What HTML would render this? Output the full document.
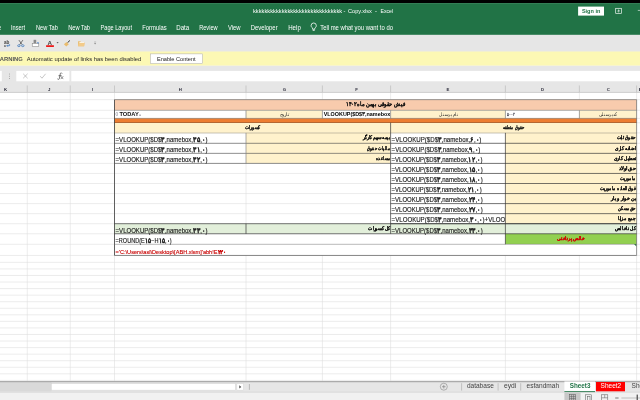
<!DOCTYPE html>
<html lang="en">
<head>
<meta charset="utf-8">
<title>Copy.xlsx - Excel</title>
<style>
html,body{margin:0;padding:0;background:#fff;overflow:hidden}
body{width:640px;height:400px;font-family:"Liberation Sans", sans-serif;}
svg{display:block;position:absolute;left:0;top:0;font-family:"Liberation Sans", sans-serif;}
text{white-space:pre}
</style>
</head>
<body>
<svg width="640" height="400" viewBox="0 0 640 400">
<defs><filter id="soft" x="-2%" y="-2%" width="104%" height="104%" color-interpolation-filters="sRGB"><feGaussianBlur stdDeviation="0.3"/></filter></defs>
<g filter="url(#soft)">
<rect x="-4" y="-4" width="648" height="408" fill="#fff" />
<rect x="-4" y="-4" width="648" height="7.1" fill="#000" />
<rect x="-4" y="3.1" width="648" height="31.8" fill="#217346" />
<rect x="-4" y="34.9" width="648" height="17" fill="#E6E6E6" />
<rect x="-4" y="51.5" width="648" height="14.25" fill="#FCF8B4" />
<rect x="-4" y="65.75" width="648" height="27.2" fill="#E6E6E6" />
<text x="252.9" y="13.1" font-size="5.7" fill="#fff" text-anchor="start" textLength="89.3" lengthAdjust="spacingAndGlyphs" >kkkkkkkkkkkkkkkkkkkkkkkkkkkkkkk</text>
<text x="343.6" y="13.1" font-size="5.7" fill="#fff" text-anchor="start" >-</text>
<text x="348" y="13.1" font-size="5.7" fill="#fff" text-anchor="start" textLength="23.9" lengthAdjust="spacingAndGlyphs" >Copy.xlsx</text>
<text x="375" y="13.1" font-size="5.7" fill="#fff" text-anchor="start" >-</text>
<text x="380.5" y="13.1" font-size="5.7" fill="#fff" text-anchor="start" textLength="12.5" lengthAdjust="spacingAndGlyphs" >Excel</text>
<rect x="578.1" y="6.6" width="25.9" height="9" fill="#fff" />
<text x="591.1" y="13.2" font-size="6" fill="#217346" text-anchor="middle" font-weight="bold" textLength="18.4" lengthAdjust="spacingAndGlyphs" >Sign in</text>
<g stroke="#fff" stroke-width="0.65" fill="none"><rect x="615.7" y="8.3" width="5.9" height="5"/><path d="M617.4 11.2l1.2-1.2 1.2 1.2M618.6 10v2.4"/></g>
<line x1="637.8" y1="10.4" x2="640" y2="10.4" stroke="#fff" stroke-width="0.6" />
<text x="-1.2" y="29.7" font-size="6.3" fill="#fff" text-anchor="start" textLength="2.4" lengthAdjust="spacingAndGlyphs" >e</text>
<text x="11" y="29.7" font-size="6.3" fill="#fff" text-anchor="start" textLength="14" lengthAdjust="spacingAndGlyphs" >Insert</text>
<text x="36" y="29.7" font-size="6.3" fill="#fff" text-anchor="start" textLength="21.8" lengthAdjust="spacingAndGlyphs" >New Tab</text>
<text x="68.2" y="29.7" font-size="6.3" fill="#fff" text-anchor="start" textLength="21.8" lengthAdjust="spacingAndGlyphs" >New Tab</text>
<text x="100.6" y="29.7" font-size="6.3" fill="#fff" text-anchor="start" textLength="31.4" lengthAdjust="spacingAndGlyphs" >Page Layout</text>
<text x="142.3" y="29.7" font-size="6.3" fill="#fff" text-anchor="start" textLength="24.3" lengthAdjust="spacingAndGlyphs" >Formulas</text>
<text x="176.2" y="29.7" font-size="6.3" fill="#fff" text-anchor="start" textLength="13" lengthAdjust="spacingAndGlyphs" >Data</text>
<text x="199.2" y="29.7" font-size="6.3" fill="#fff" text-anchor="start" textLength="18.4" lengthAdjust="spacingAndGlyphs" >Review</text>
<text x="228" y="29.7" font-size="6.3" fill="#fff" text-anchor="start" textLength="12.6" lengthAdjust="spacingAndGlyphs" >View</text>
<text x="250.8" y="29.7" font-size="6.3" fill="#fff" text-anchor="start" textLength="26.8" lengthAdjust="spacingAndGlyphs" >Developer</text>
<text x="288.2" y="29.7" font-size="6.3" fill="#fff" text-anchor="start" textLength="12.6" lengthAdjust="spacingAndGlyphs" >Help</text>
<text x="320.2" y="29.7" font-size="6.3" fill="#fff" text-anchor="start" textLength="72.8" lengthAdjust="spacingAndGlyphs" >Tell me what you want to do</text>
<g stroke="#fff" stroke-width="0.8" fill="none"><path d="M312.6 29.3v-1.2c-1-.7-1.5-1.5-1.5-2.5a2.6 2.6 0 0 1 5.2 0c0 1-.5 1.8-1.5 2.5v1.2z"/><path d="M312.7 30.4h2"/></g>
<g>
<text x="4" y="43.8" font-size="4.6" fill="#444" text-anchor="start" font-weight="bold" textLength="5.4" lengthAdjust="spacingAndGlyphs" >ab</text>
<text x="4" y="46.9" font-size="4.2" fill="#444" text-anchor="start" font-weight="bold" >c</text>
<path d="M9.6 44.2v1.5h-2.6M7.9 44.7l-1 1 1 1" stroke="#2B6CB8" stroke-width="0.7" fill="none"/>
<path d="M18.9 40.1l3.3 4.6M22.9 40.1l-3.3 4.6" stroke="#4a4a4a" stroke-width="0.75" fill="none"/>
<ellipse cx="18.9" cy="45.7" rx="1.3" ry="0.95" stroke="#2B6CB8" stroke-width="0.65" fill="none"/><ellipse cx="22.8" cy="45.7" rx="1.3" ry="0.95" stroke="#2B6CB8" stroke-width="0.65" fill="none"/>
<rect x="33.6" y="39.8" width="2.6" height="4" fill="#8a8a8a"/>
<rect x="32.2" y="43.3" width="6.6" height="3.4" fill="#fff" stroke="#777" stroke-width="0.5"/>
<rect x="37.2" y="42.1" width="1.5" height="1.3" fill="#5B8FD0"/>
<text x="49.7" y="44.7" font-size="6.2" fill="#444" text-anchor="middle" font-weight="bold" >A</text>
<rect x="46.1" y="45.3" width="7.8" height="1.6" fill="#F00000" />
<path d="M56.5 42.1h2.2l-1.1 1.3z" fill="#666"/>
<path d="M69.9 40.5l-2.4 2.2" stroke="#333" stroke-width="1.0"/><path d="M63.9 44.3l2.6-2.2 2.3 2.1-2.5 2.2z" fill="#E9BC6E"/>
<path d="M78.1 41.3h2.3l.6.7h3.2v4.2h-6.1z" fill="#E9BC6E"/><path d="M79.4 41.9h4.6v1.6h-4.6z" fill="#FAF3E4"/><path d="M78.1 46.2l.9-3.2h5.9l-.9 3.2z" fill="#F3CB8A"/>
<path d="M94.1 42.9h2l-1 1.5z" fill="#888"/><path d="M94.1 42.0h2" stroke="#888" stroke-width="0.45"/>
</g>
<text x="-5.4" y="60.6" font-size="5.7" fill="#555" text-anchor="start" font-weight="bold" textLength="28.2" lengthAdjust="spacingAndGlyphs" >WARNING</text>
<text x="26.8" y="60.6" font-size="5.8" fill="#262626" text-anchor="start" textLength="114.4" lengthAdjust="spacingAndGlyphs" >Automatic update of links has been disabled</text>
<rect x="150.4" y="53.9" width="52.1" height="9.7" fill="#fff" stroke="#ABABAB" stroke-width="0.5"/>
<text x="176.3" y="60.7" font-size="5.8" fill="#222" text-anchor="middle" textLength="38.8" lengthAdjust="spacingAndGlyphs" >Enable Content</text>
<rect x="-1" y="70.9" width="2.8" height="10.4" fill="#fff" />
<rect x="9" y="73.6" width="0.7" height="0.9" fill="#8a8a8a" />
<rect x="9" y="75.8" width="0.7" height="0.9" fill="#8a8a8a" />
<rect x="9" y="78" width="0.7" height="0.9" fill="#8a8a8a" />
<rect x="16.3" y="70.9" width="53.1" height="10.4" fill="#fff" />
<rect x="71.3" y="70.9" width="570" height="10.4" fill="#fff" />
<path d="M23.2 73.8l4.4 4.4M27.6 73.8l-4.4 4.4" stroke="#A0A0A0" stroke-width="0.6" fill="none"/>
<path d="M40.2 76.2l1.8 2 3.6-4.4" stroke="#A0A0A0" stroke-width="0.6" fill="none"/>
<g stroke="#4a4a4a" stroke-width="0.75" fill="none" stroke-linecap="round"><path d="M61.9 73.2C61.4 72.5 60.5 72.6 60.3 73.7L59.4 78.4C59.2 79.5 58.4 79.7 57.7 79.1"/><path d="M58.9 75.7H61.2"/><path d="M61 76.5l2 2.3M63 76.5l-2 2.3" stroke-width="0.6"/></g>
<text x="5.6" y="91.2" font-size="4.3" fill="#2d2d3c" text-anchor="middle" font-weight="bold" >K</text>
<text x="49.1" y="91.2" font-size="4.3" fill="#2d2d3c" text-anchor="middle" font-weight="bold" >J</text>
<text x="92.6" y="91.2" font-size="4.3" fill="#2d2d3c" text-anchor="middle" font-weight="bold" >I</text>
<text x="180.3" y="91.2" font-size="4.3" fill="#2d2d3c" text-anchor="middle" font-weight="bold" >H</text>
<text x="284.3" y="91.2" font-size="4.3" fill="#2d2d3c" text-anchor="middle" font-weight="bold" >G</text>
<text x="356.6" y="91.2" font-size="4.3" fill="#2d2d3c" text-anchor="middle" font-weight="bold" >F</text>
<text x="448" y="91.2" font-size="4.3" fill="#2d2d3c" text-anchor="middle" font-weight="bold" >E</text>
<text x="542.6" y="91.2" font-size="4.3" fill="#2d2d3c" text-anchor="middle" font-weight="bold" >D</text>
<text x="608.4" y="91.2" font-size="4.3" fill="#2d2d3c" text-anchor="middle" font-weight="bold" >C</text>
<text x="640.3" y="91.2" font-size="4.3" fill="#2d2d3c" text-anchor="middle" font-weight="bold" >B</text>
<line x1="27.25" y1="85.5" x2="27.25" y2="92.5" stroke="#B5B5B5" stroke-width="0.6" />
<line x1="70.25" y1="85.5" x2="70.25" y2="92.5" stroke="#B5B5B5" stroke-width="0.6" />
<line x1="114.5" y1="85.5" x2="114.5" y2="92.5" stroke="#B5B5B5" stroke-width="0.6" />
<line x1="246" y1="85.5" x2="246" y2="92.5" stroke="#B5B5B5" stroke-width="0.6" />
<line x1="322.4" y1="85.5" x2="322.4" y2="92.5" stroke="#B5B5B5" stroke-width="0.6" />
<line x1="390.6" y1="85.5" x2="390.6" y2="92.5" stroke="#B5B5B5" stroke-width="0.6" />
<line x1="505.4" y1="85.5" x2="505.4" y2="92.5" stroke="#B5B5B5" stroke-width="0.6" />
<line x1="579.4" y1="85.5" x2="579.4" y2="92.5" stroke="#B5B5B5" stroke-width="0.6" />
<line x1="636.6" y1="85.5" x2="636.6" y2="92.5" stroke="#B5B5B5" stroke-width="0.6" />
<line x1="-4" y1="92.4" x2="644" y2="92.4" stroke="#BDBDBD" stroke-width="0.6" />
<line x1="-4" y1="99.65" x2="644" y2="99.65" stroke="#DDDDDD" stroke-width="0.55" />
<line x1="-4" y1="110.3" x2="644" y2="110.3" stroke="#DDDDDD" stroke-width="0.55" />
<line x1="-4" y1="118.4" x2="644" y2="118.4" stroke="#DDDDDD" stroke-width="0.55" />
<line x1="-4" y1="122.7" x2="644" y2="122.7" stroke="#DDDDDD" stroke-width="0.55" />
<line x1="-4" y1="132.9" x2="644" y2="132.9" stroke="#DDDDDD" stroke-width="0.55" />
<line x1="-4" y1="143.3" x2="644" y2="143.3" stroke="#DDDDDD" stroke-width="0.55" />
<line x1="-4" y1="153.35" x2="644" y2="153.35" stroke="#DDDDDD" stroke-width="0.55" />
<line x1="-4" y1="163.4" x2="644" y2="163.4" stroke="#DDDDDD" stroke-width="0.55" />
<line x1="-4" y1="173.45" x2="644" y2="173.45" stroke="#DDDDDD" stroke-width="0.55" />
<line x1="-4" y1="183.5" x2="644" y2="183.5" stroke="#DDDDDD" stroke-width="0.55" />
<line x1="-4" y1="193.55" x2="644" y2="193.55" stroke="#DDDDDD" stroke-width="0.55" />
<line x1="-4" y1="203.6" x2="644" y2="203.6" stroke="#DDDDDD" stroke-width="0.55" />
<line x1="-4" y1="213.65" x2="644" y2="213.65" stroke="#DDDDDD" stroke-width="0.55" />
<line x1="-4" y1="223.7" x2="644" y2="223.7" stroke="#DDDDDD" stroke-width="0.55" />
<line x1="-4" y1="233.75" x2="644" y2="233.75" stroke="#DDDDDD" stroke-width="0.55" />
<line x1="-4" y1="244.3" x2="644" y2="244.3" stroke="#DDDDDD" stroke-width="0.55" />
<line x1="-4" y1="255.45" x2="644" y2="255.45" stroke="#DDDDDD" stroke-width="0.55" />
<line x1="-4" y1="262.357" x2="644" y2="262.357" stroke="#DDDDDD" stroke-width="0.55" />
<line x1="-4" y1="268.914" x2="644" y2="268.914" stroke="#DDDDDD" stroke-width="0.55" />
<line x1="-4" y1="275.471" x2="644" y2="275.471" stroke="#DDDDDD" stroke-width="0.55" />
<line x1="-4" y1="282.028" x2="644" y2="282.028" stroke="#DDDDDD" stroke-width="0.55" />
<line x1="-4" y1="288.585" x2="644" y2="288.585" stroke="#DDDDDD" stroke-width="0.55" />
<line x1="-4" y1="295.142" x2="644" y2="295.142" stroke="#DDDDDD" stroke-width="0.55" />
<line x1="-4" y1="301.699" x2="644" y2="301.699" stroke="#DDDDDD" stroke-width="0.55" />
<line x1="-4" y1="308.256" x2="644" y2="308.256" stroke="#DDDDDD" stroke-width="0.55" />
<line x1="-4" y1="314.813" x2="644" y2="314.813" stroke="#DDDDDD" stroke-width="0.55" />
<line x1="-4" y1="321.37" x2="644" y2="321.37" stroke="#DDDDDD" stroke-width="0.55" />
<line x1="-4" y1="327.927" x2="644" y2="327.927" stroke="#DDDDDD" stroke-width="0.55" />
<line x1="-4" y1="334.484" x2="644" y2="334.484" stroke="#DDDDDD" stroke-width="0.55" />
<line x1="-4" y1="341.041" x2="644" y2="341.041" stroke="#DDDDDD" stroke-width="0.55" />
<line x1="-4" y1="347.598" x2="644" y2="347.598" stroke="#DDDDDD" stroke-width="0.55" />
<line x1="-4" y1="354.155" x2="644" y2="354.155" stroke="#DDDDDD" stroke-width="0.55" />
<line x1="-4" y1="360.712" x2="644" y2="360.712" stroke="#DDDDDD" stroke-width="0.55" />
<line x1="-4" y1="367.269" x2="644" y2="367.269" stroke="#DDDDDD" stroke-width="0.55" />
<line x1="-4" y1="373.826" x2="644" y2="373.826" stroke="#DDDDDD" stroke-width="0.55" />
<line x1="-4" y1="380.383" x2="644" y2="380.383" stroke="#DDDDDD" stroke-width="0.55" />
<line x1="27.25" y1="92.8" x2="27.25" y2="381.4" stroke="#DDDDDD" stroke-width="0.55" />
<line x1="70.25" y1="92.8" x2="70.25" y2="381.4" stroke="#DDDDDD" stroke-width="0.55" />
<line x1="114.5" y1="92.8" x2="114.5" y2="381.4" stroke="#DDDDDD" stroke-width="0.55" />
<line x1="246" y1="92.8" x2="246" y2="381.4" stroke="#DDDDDD" stroke-width="0.55" />
<line x1="322.4" y1="92.8" x2="322.4" y2="381.4" stroke="#DDDDDD" stroke-width="0.55" />
<line x1="390.6" y1="92.8" x2="390.6" y2="381.4" stroke="#DDDDDD" stroke-width="0.55" />
<line x1="505.4" y1="92.8" x2="505.4" y2="381.4" stroke="#DDDDDD" stroke-width="0.55" />
<line x1="579.4" y1="92.8" x2="579.4" y2="381.4" stroke="#DDDDDD" stroke-width="0.55" />
<line x1="636.6" y1="92.8" x2="636.6" y2="381.4" stroke="#DDDDDD" stroke-width="0.55" />
<rect x="114.5" y="99.65" width="522.1" height="10.65" fill="#F8CBAD" />
<rect x="114.5" y="110.3" width="522.1" height="8.1" fill="#fff" />
<rect x="246" y="110.3" width="76.4" height="8.1" fill="#FFF2CC" />
<rect x="390.6" y="110.3" width="114.8" height="8.1" fill="#FFF2CC" />
<rect x="579.4" y="110.3" width="57.2" height="8.1" fill="#FFF2CC" />
<rect x="114.5" y="118.4" width="522.1" height="4.3" fill="#ED7D31" />
<rect x="114.5" y="122.7" width="522.1" height="10.2" fill="#FFF2CC" />
<rect x="114.5" y="132.9" width="131.5" height="30.5" fill="#fff" />
<rect x="246" y="132.9" width="144.6" height="30.5" fill="#FFF2CC" />
<rect x="114.5" y="163.4" width="276.1" height="60.3" fill="#fff" />
<rect x="390.6" y="132.9" width="114.8" height="90.8" fill="#fff" />
<rect x="505.4" y="132.9" width="131.2" height="90.8" fill="#FFF2CC" />
<rect x="114.5" y="223.7" width="522.1" height="10.05" fill="#E2EFDA" />
<rect x="114.5" y="233.75" width="522.1" height="10.55" fill="#fff" />
<rect x="505.4" y="233.75" width="131.2" height="10.55" fill="#92D050" />
<rect x="114.5" y="244.3" width="522.1" height="11.15" fill="#fff" />
<path d="M636.4 244v2.4l-2.4-2.4z" fill="#17752B"/>
<line x1="114.5" y1="173.45" x2="390.6" y2="173.45" stroke="#DDDDDD" stroke-width="0.55" />
<line x1="114.5" y1="183.5" x2="390.6" y2="183.5" stroke="#DDDDDD" stroke-width="0.55" />
<line x1="114.5" y1="193.55" x2="390.6" y2="193.55" stroke="#DDDDDD" stroke-width="0.55" />
<line x1="114.5" y1="203.6" x2="390.6" y2="203.6" stroke="#DDDDDD" stroke-width="0.55" />
<line x1="114.5" y1="213.65" x2="390.6" y2="213.65" stroke="#DDDDDD" stroke-width="0.55" />
<line x1="246" y1="163.4" x2="246" y2="223.7" stroke="#DDDDDD" stroke-width="0.55" />
<text x="405.1" y="106" font-size="5.6" fill="#111" text-anchor="start" font-weight="bold" textLength="59" lengthAdjust="spacingAndGlyphs" direction="rtl" stroke="#111" stroke-width="0.12">فیش حقوقی بهمن ماه ۱۴۰۲</text>
<text x="115.5" y="115.3" font-size="3.9" fill="#667" text-anchor="start" >()</text>
<text x="119.4" y="115.8" font-size="5.6" fill="#111" text-anchor="start" font-weight="bold" textLength="19.4" lengthAdjust="spacingAndGlyphs" >TODAY</text>
<text x="139" y="115.8" font-size="3.6" fill="#667" text-anchor="start" >=</text>
<text x="289.3" y="115.6" font-size="4.9" fill="#2a2a2a" text-anchor="start" textLength="9.4" lengthAdjust="spacingAndGlyphs" direction="rtl">تاریخ</text>
<clipPath id="cf3"><rect x="322.8" y="110.3" width="67.3" height="8.1"/></clipPath>
<text x="323.7" y="115.7" font-size="5.5" fill="#000" text-anchor="start" font-weight="bold" textLength="66.6" lengthAdjust="spacingAndGlyphs" clip-path="url(#cf3)">VLOOKUP($D$۳,namebox</text>
<text x="457.95" y="115.6" font-size="4.8" fill="#2a2a2a" text-anchor="start" textLength="18.7" lengthAdjust="spacingAndGlyphs" direction="rtl">نام پرسنل</text>
<text x="507" y="115.6" font-size="4.8" fill="#223" text-anchor="start" font-weight="bold" textLength="8.6" lengthAdjust="spacingAndGlyphs" >۵۰۰۲</text>
<text x="616.95" y="116" font-size="4.8" fill="#2a2a2a" text-anchor="start" textLength="17.9" lengthAdjust="spacingAndGlyphs" direction="rtl">کدپرسنلی</text>
<text x="259.75" y="129" font-size="5" fill="#111" text-anchor="start" font-weight="bold" textLength="14.7" lengthAdjust="spacingAndGlyphs" direction="rtl" stroke="#111" stroke-width="0.12">کسورات</text>
<text x="524.5" y="129" font-size="5" fill="#111" text-anchor="start" font-weight="bold" textLength="22" lengthAdjust="spacingAndGlyphs" direction="rtl" stroke="#111" stroke-width="0.12">حقوق متعلقه</text>
<text x="115.6" y="142.05" font-size="6.8" fill="#222" text-anchor="start" textLength="91.8" lengthAdjust="spacingAndGlyphs"  stroke="#222" stroke-width="0.15">=VLOOKUP($D$<tspan font-weight="bold">۳</tspan>,namebox,<tspan font-weight="bold">۳۵</tspan>,<tspan font-weight="bold">۰</tspan>)</text>
<text x="115.6" y="152.1" font-size="6.8" fill="#222" text-anchor="start" textLength="91.8" lengthAdjust="spacingAndGlyphs"  stroke="#222" stroke-width="0.15">=VLOOKUP($D$<tspan font-weight="bold">۳</tspan>,namebox,<tspan font-weight="bold">۳۱</tspan>,<tspan font-weight="bold">۰</tspan>)</text>
<text x="115.6" y="162.15" font-size="6.8" fill="#222" text-anchor="start" textLength="91.8" lengthAdjust="spacingAndGlyphs"  stroke="#222" stroke-width="0.15">=VLOOKUP($D$<tspan font-weight="bold">۳</tspan>,namebox,<tspan font-weight="bold">۳۲</tspan>,<tspan font-weight="bold">۰</tspan>)</text>
<text x="115.6" y="232.5" font-size="6.8" fill="#222" text-anchor="start" textLength="91.8" lengthAdjust="spacingAndGlyphs"  stroke="#222" stroke-width="0.15">=VLOOKUP($D$<tspan font-weight="bold">۳</tspan>,namebox,<tspan font-weight="bold">۳۳</tspan>,<tspan font-weight="bold">۰</tspan>)</text>
<text x="115.6" y="243.05" font-size="6.8" fill="#222" text-anchor="start" textLength="56.1" lengthAdjust="spacingAndGlyphs"  stroke="#222" stroke-width="0.15">=ROUND(E<tspan font-weight="bold">۱۵</tspan>−H<tspan font-weight="bold">۱۵</tspan>,<tspan font-weight="bold">۰</tspan>)</text>
<text x="115.6" y="254.35" font-size="5.7" fill="#C80000" text-anchor="start" textLength="110.8" lengthAdjust="spacingAndGlyphs"  stroke="#C80000" stroke-width="0.12">='C:\Users\asl\Desktop\[ABH.xlsm]'abh!E<tspan font-weight="bold">۲۲۰</tspan></text>
<text x="391.6" y="142.05" font-size="6.8" fill="#222" text-anchor="start" textLength="89.7" lengthAdjust="spacingAndGlyphs"  stroke="#222" stroke-width="0.15">=VLOOKUP($D$<tspan font-weight="bold">۳</tspan>,namebox,<tspan font-weight="bold">۶</tspan>,<tspan font-weight="bold">۰</tspan>)</text>
<text x="391.6" y="152.1" font-size="6.8" fill="#222" text-anchor="start" textLength="88.6" lengthAdjust="spacingAndGlyphs"  stroke="#222" stroke-width="0.15">=VLOOKUP($D$<tspan font-weight="bold">۳</tspan>,namebox,<tspan font-weight="bold">۹</tspan>,<tspan font-weight="bold">۰</tspan>)</text>
<text x="391.6" y="162.15" font-size="6.8" fill="#222" text-anchor="start" textLength="91" lengthAdjust="spacingAndGlyphs"  stroke="#222" stroke-width="0.15">=VLOOKUP($D$<tspan font-weight="bold">۳</tspan>,namebox,<tspan font-weight="bold">۱۲</tspan>,<tspan font-weight="bold">۰</tspan>)</text>
<text x="391.6" y="172.2" font-size="6.8" fill="#222" text-anchor="start" textLength="91.2" lengthAdjust="spacingAndGlyphs"  stroke="#222" stroke-width="0.15">=VLOOKUP($D$<tspan font-weight="bold">۳</tspan>,namebox,<tspan font-weight="bold">۱۵</tspan>,<tspan font-weight="bold">۰</tspan>)</text>
<text x="391.6" y="182.25" font-size="6.8" fill="#222" text-anchor="start" textLength="91.2" lengthAdjust="spacingAndGlyphs"  stroke="#222" stroke-width="0.15">=VLOOKUP($D$<tspan font-weight="bold">۳</tspan>,namebox,<tspan font-weight="bold">۱۸</tspan>,<tspan font-weight="bold">۰</tspan>)</text>
<text x="391.6" y="192.3" font-size="6.8" fill="#222" text-anchor="start" textLength="90.2" lengthAdjust="spacingAndGlyphs"  stroke="#222" stroke-width="0.15">=VLOOKUP($D$<tspan font-weight="bold">۳</tspan>,namebox,<tspan font-weight="bold">۲۱</tspan>,<tspan font-weight="bold">۰</tspan>)</text>
<text x="391.6" y="202.35" font-size="6.8" fill="#222" text-anchor="start" textLength="91.2" lengthAdjust="spacingAndGlyphs"  stroke="#222" stroke-width="0.15">=VLOOKUP($D$<tspan font-weight="bold">۳</tspan>,namebox,<tspan font-weight="bold">۲۴</tspan>,<tspan font-weight="bold">۰</tspan>)</text>
<text x="391.6" y="212.4" font-size="6.8" fill="#222" text-anchor="start" textLength="91.2" lengthAdjust="spacingAndGlyphs"  stroke="#222" stroke-width="0.15">=VLOOKUP($D$<tspan font-weight="bold">۳</tspan>,namebox,<tspan font-weight="bold">۲۷</tspan>,<tspan font-weight="bold">۰</tspan>)</text>
<text x="391.6" y="232.5" font-size="6.8" fill="#222" text-anchor="start" textLength="91.2" lengthAdjust="spacingAndGlyphs"  stroke="#222" stroke-width="0.15">=VLOOKUP($D$<tspan font-weight="bold">۳</tspan>,namebox,<tspan font-weight="bold">۳۳</tspan>,<tspan font-weight="bold">۰</tspan>)</text>
<clipPath id="ce14"><rect x="390.6" y="213.65" width="114.3" height="10.05"/></clipPath>
<text x="391.6" y="222.45" font-size="6.8" fill="#222" text-anchor="start" textLength="186" lengthAdjust="spacingAndGlyphs" clip-path="url(#ce14)" stroke="#222" stroke-width="0.15">=VLOOKUP($D$<tspan font-weight="bold">۳</tspan>,namebox,<tspan font-weight="bold">۳۰</tspan>,<tspan font-weight="bold">۰</tspan>)+VLOOKUP($D$<tspan font-weight="bold">۳</tspan>,namebox,<tspan font-weight="bold">۳۱</tspan>,<tspan font-weight="bold">۰</tspan>)</text>
<text x="390" y="139.4" font-size="4.9" fill="#111" text-anchor="start" font-weight="bold" textLength="27.3" lengthAdjust="spacingAndGlyphs" direction="rtl" stroke="#111" stroke-width="0.18">بیمه سهم کارگر</text>
<text x="390" y="149.625" font-size="4.9" fill="#111" text-anchor="start" font-weight="bold" textLength="22.8" lengthAdjust="spacingAndGlyphs" direction="rtl" stroke="#111" stroke-width="0.18">مالیات حقوق</text>
<text x="390" y="159.675" font-size="4.9" fill="#111" text-anchor="start" font-weight="bold" textLength="13.8" lengthAdjust="spacingAndGlyphs" direction="rtl" stroke="#111" stroke-width="0.18">مساعده</text>
<text x="390" y="230.025" font-size="4.9" fill="#111" text-anchor="start" font-weight="bold" textLength="21.7" lengthAdjust="spacingAndGlyphs" direction="rtl" stroke="#111" stroke-width="0.18">کل کسورات</text>
<text x="635.6" y="139.4" font-size="4.9" fill="#111" text-anchor="start" font-weight="bold" textLength="19.1" lengthAdjust="spacingAndGlyphs" direction="rtl" stroke="#111" stroke-width="0.18">حقوق ثابت</text>
<text x="635.6" y="149.625" font-size="4.9" fill="#111" text-anchor="start" font-weight="bold" textLength="20.6" lengthAdjust="spacingAndGlyphs" direction="rtl" stroke="#111" stroke-width="0.18">اضافه کاری</text>
<text x="635.6" y="159.675" font-size="4.9" fill="#111" text-anchor="start" font-weight="bold" textLength="21.85" lengthAdjust="spacingAndGlyphs" direction="rtl" stroke="#111" stroke-width="0.18">تعطیل کاری</text>
<text x="635.6" y="169.725" font-size="4.9" fill="#111" text-anchor="start" font-weight="bold" textLength="16.85" lengthAdjust="spacingAndGlyphs" direction="rtl" stroke="#111" stroke-width="0.18">حق اولاد</text>
<text x="635.6" y="179.775" font-size="4.9" fill="#111" text-anchor="start" font-weight="bold" textLength="15.35" lengthAdjust="spacingAndGlyphs" direction="rtl" stroke="#111" stroke-width="0.18">ماموریت</text>
<text x="635.6" y="189.825" font-size="4.9" fill="#111" text-anchor="start" font-weight="bold" textLength="35.35" lengthAdjust="spacingAndGlyphs" direction="rtl" stroke="#111" stroke-width="0.18">فوق العاده ماموریت</text>
<text x="635.6" y="199.875" font-size="4.9" fill="#111" text-anchor="start" font-weight="bold" textLength="24.35" lengthAdjust="spacingAndGlyphs" direction="rtl" stroke="#111" stroke-width="0.18">بن خوار و بار</text>
<text x="635.6" y="209.925" font-size="4.9" fill="#111" text-anchor="start" font-weight="bold" textLength="17.6" lengthAdjust="spacingAndGlyphs" direction="rtl" stroke="#111" stroke-width="0.18">حق مسکن</text>
<text x="635.6" y="219.975" font-size="4.9" fill="#111" text-anchor="start" font-weight="bold" textLength="17.85" lengthAdjust="spacingAndGlyphs" direction="rtl" stroke="#111" stroke-width="0.18">جمع مزایا</text>
<text x="635.6" y="230.025" font-size="4.9" fill="#111" text-anchor="start" font-weight="bold" textLength="20.6" lengthAdjust="spacingAndGlyphs" direction="rtl" stroke="#111" stroke-width="0.18">کل ناخالص</text>
<text x="585" y="240.325" font-size="4.9" fill="#D00000" text-anchor="start" font-weight="bold" textLength="28" lengthAdjust="spacingAndGlyphs" direction="rtl" stroke="#D00000" stroke-width="0.2">خالص پرداختی</text>
<rect x="-4" y="381.4" width="648" height="11.4" fill="#E6E6E6" />
<rect x="-4" y="382" width="55.5" height="9.3" fill="#D9D9D9" />
<line x1="-4" y1="381.6" x2="644" y2="381.6" stroke="#ABABAB" stroke-width="1.1" />
<rect x="-4" y="392.4" width="648" height="12" fill="#F1F1F1" />
<line x1="-4" y1="392.2" x2="644" y2="392.2" stroke="#CFCFCF" stroke-width="0.6" />
<rect x="51.5" y="383.8" width="183.7" height="6.3" fill="#fff" stroke="#CFCFCF" stroke-width="0.4"/>
<rect x="236.9" y="383.8" width="6.5" height="6.3" fill="#fff" stroke="#CFCFCF" stroke-width="0.4"/>
<path d="M239.3 385.2l2 1.7-2 1.7z" fill="#444"/>
<line x1="249.4" y1="384" x2="249.4" y2="389.8" stroke="#9a9a9a" stroke-width="0.6" />
<circle cx="443.8" cy="386.7" r="3.5" fill="none" stroke="#777" stroke-width="0.5"/><path d="M442 386.7h3.6M443.8 384.9v3.6" stroke="#777" stroke-width="0.6"/>
<line x1="461.6" y1="383.2" x2="461.6" y2="390.6" stroke="#9a9a9a" stroke-width="0.5" />
<line x1="498.1" y1="383.2" x2="498.1" y2="390.6" stroke="#9a9a9a" stroke-width="0.5" />
<line x1="520.7" y1="383.2" x2="520.7" y2="390.6" stroke="#9a9a9a" stroke-width="0.5" />
<text x="466.9" y="387.7" font-size="6.8" fill="#444" text-anchor="start" textLength="26.9" lengthAdjust="spacingAndGlyphs" >database</text>
<text x="504" y="387.7" font-size="6.8" fill="#444" text-anchor="start" textLength="12.3" lengthAdjust="spacingAndGlyphs" >eydi</text>
<text x="526.6" y="387.7" font-size="6.8" fill="#444" text-anchor="start" textLength="32.5" lengthAdjust="spacingAndGlyphs" >esfandmah</text>
<rect x="564.4" y="381.5" width="30.6" height="10.2" fill="#fff" />
<line x1="564.4" y1="391.6" x2="595" y2="391.6" stroke="#217346" stroke-width="0.9" />
<text x="569.8" y="387.7" font-size="6.8" fill="#217346" text-anchor="start" font-weight="bold" textLength="20.6" lengthAdjust="spacingAndGlyphs" >Sheet3</text>
<rect x="596" y="382" width="29" height="9.3" fill="#FF0000" />
<text x="600.6" y="387.7" font-size="6.8" fill="#fff" text-anchor="start" textLength="20.6" lengthAdjust="spacingAndGlyphs" >Sheet2</text>
<text x="631.6" y="387.7" font-size="6.8" fill="#444" text-anchor="start" textLength="20.6" lengthAdjust="spacingAndGlyphs" >Sheet1</text>
<rect x="564.4" y="392.6" width="16.2" height="7.4" fill="#C8C8C8" />
<g stroke="#555" stroke-width="0.5" fill="none"><rect x="569.6" y="394.6" width="6" height="5.6"/><path d="M571.6 394.6v5.6M573.6 394.6v5.6M569.6 396.6h6M569.6 398.6h6"/></g>
<g stroke="#555" stroke-width="0.5" fill="none"><rect x="585.6" y="394.8" width="6" height="5.6"/><rect x="587.4" y="396.4" width="2.6" height="4"/></g>
<g stroke="#555" stroke-width="0.5" fill="none"><rect x="601.6" y="394.8" width="6.2" height="5.6"/><path d="M604.7 394.8v3M601.6 397.8h6.2"/></g>
<line x1="615.2" y1="398" x2="618.6" y2="398" stroke="#444" stroke-width="0.7" />
<line x1="621.4" y1="398" x2="640" y2="398" stroke="#777" stroke-width="0.4" />
<rect x="636.6" y="394.6" width="1.3" height="6" fill="#555" />
</g>
<g>
<line x1="114.5" y1="99.65" x2="636.6" y2="99.65" stroke="#666" stroke-width="0.65" />
<line x1="114.5" y1="110.3" x2="636.6" y2="110.3" stroke="#777" stroke-width="0.6" />
<line x1="114.5" y1="118.4" x2="636.6" y2="118.4" stroke="#857568" stroke-width="0.65" />
<line x1="114.5" y1="122.5" x2="636.6" y2="122.5" stroke="#A5521c" stroke-width="0.8" />
<line x1="114.5" y1="133" x2="636.6" y2="133" stroke="#9c937c" stroke-width="0.55" />
<line x1="114.5" y1="99.65" x2="114.5" y2="255.45" stroke="#383838" stroke-width="0.8" />
<line x1="636.6" y1="99.65" x2="636.6" y2="255.45" stroke="#626262" stroke-width="0.65" />
<line x1="246" y1="110.3" x2="246" y2="118.4" stroke="#808080" stroke-width="0.7" />
<line x1="322.4" y1="110.3" x2="322.4" y2="118.4" stroke="#808080" stroke-width="0.7" />
<line x1="390.6" y1="110.3" x2="390.6" y2="118.4" stroke="#808080" stroke-width="0.7" />
<line x1="505.4" y1="110.3" x2="505.4" y2="118.4" stroke="#808080" stroke-width="0.7" />
<line x1="579.4" y1="110.3" x2="579.4" y2="118.4" stroke="#808080" stroke-width="0.7" />
<line x1="390.6" y1="122.7" x2="390.6" y2="233.75" stroke="#383838" stroke-width="0.7" />
<line x1="114.5" y1="143.3" x2="390.6" y2="143.3" stroke="#505050" stroke-width="0.65" />
<line x1="114.5" y1="153.35" x2="390.6" y2="153.35" stroke="#505050" stroke-width="0.65" />
<line x1="114.5" y1="163.4" x2="390.6" y2="163.4" stroke="#505050" stroke-width="0.65" />
<line x1="246" y1="132.9" x2="246" y2="163.4" stroke="#858585" stroke-width="0.7" />
<line x1="390.6" y1="143.3" x2="636.6" y2="143.3" stroke="#383838" stroke-width="0.7" />
<line x1="390.6" y1="153.35" x2="636.6" y2="153.35" stroke="#383838" stroke-width="0.7" />
<line x1="390.6" y1="163.4" x2="636.6" y2="163.4" stroke="#383838" stroke-width="0.7" />
<line x1="390.6" y1="173.45" x2="636.6" y2="173.45" stroke="#383838" stroke-width="0.7" />
<line x1="390.6" y1="183.5" x2="636.6" y2="183.5" stroke="#383838" stroke-width="0.7" />
<line x1="390.6" y1="193.55" x2="636.6" y2="193.55" stroke="#383838" stroke-width="0.7" />
<line x1="390.6" y1="203.6" x2="636.6" y2="203.6" stroke="#383838" stroke-width="0.7" />
<line x1="390.6" y1="213.65" x2="636.6" y2="213.65" stroke="#383838" stroke-width="0.7" />
<line x1="390.6" y1="223.7" x2="636.6" y2="223.7" stroke="#383838" stroke-width="0.7" />
<line x1="505.4" y1="132.9" x2="505.4" y2="244.3" stroke="#383838" stroke-width="0.7" />
<line x1="114.5" y1="223.7" x2="636.6" y2="223.7" stroke="#383838" stroke-width="0.7" />
<line x1="114.5" y1="233.75" x2="636.6" y2="233.75" stroke="#383838" stroke-width="0.7" />
<line x1="114.5" y1="244.3" x2="636.6" y2="244.3" stroke="#777" stroke-width="0.5" />
<line x1="114.5" y1="255.45" x2="636.6" y2="255.45" stroke="#555" stroke-width="0.7" />
<line x1="246" y1="223.7" x2="246" y2="233.75" stroke="#383838" stroke-width="0.7" />
</g>
</svg>
</body>
</html>
